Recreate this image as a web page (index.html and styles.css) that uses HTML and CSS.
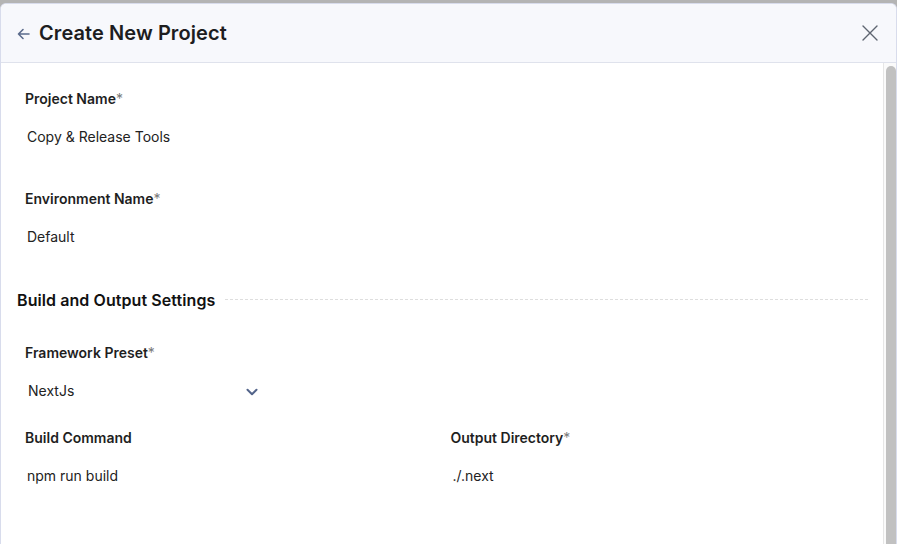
FILE: index.html
```html
<!DOCTYPE html>
<html lang="en">
<head>
<meta charset="utf-8">
<title>Create New Project</title>
<link rel="stylesheet" href="styles.css">
</head>
<body>
<div class="modal">
  <header class="modal-header">
    <div class="header-left">
      <svg class="back-icon" width="13" height="12" viewBox="0 0 13 12" fill="none" stroke="currentColor" stroke-width="1.6" stroke-linecap="round" stroke-linejoin="round"><path d="M12 6H1.5M6 1.5L1.5 6L6 10.5"/></svg>
      <h1 class="title">Create New Project</h1>
    </div>
    <svg class="close-icon" width="16" height="16" viewBox="0 0 16 16" fill="none" stroke="currentColor" stroke-width="1.4" stroke-linecap="round"><path d="M1 1L15 15M15 1L1 15"/></svg>
  </header>
  <div class="modal-body">
    <div class="content">
      <div class="field">
        <div class="label">Project Name<span class="req">*</span></div>
        <div class="value">Copy &amp; Release Tools</div>
      </div>
      <div class="field">
        <div class="label">Environment Name<span class="req">*</span></div>
        <div class="value">Default</div>
      </div>
      <div class="section-title">
        <span>Build and Output Settings</span>
        <span class="dash"></span>
      </div>
      <div class="field field-select">
        <div class="label">Framework Preset<span class="req">*</span></div>
        <div class="value select">
          <span>NextJs</span>
          <svg class="chevron" width="12" height="8" viewBox="0 0 12 8" fill="none" stroke="currentColor" stroke-width="2" stroke-linecap="round" stroke-linejoin="round"><path d="M1.5 1.8L6 6.2L10.5 1.8"/></svg>
        </div>
      </div>
      <div class="row">
        <div class="field">
          <div class="label">Build Command</div>
          <div class="value">npm run build</div>
        </div>
        <div class="field">
          <div class="label">Output Directory<span class="req">*</span></div>
          <div class="value">./.next</div>
        </div>
      </div>
    </div>
    <div class="scrollbar"><div class="thumb"></div></div>
  </div>
</div>
</body>
</html>
```

FILE: styles.css
```css
* { box-sizing: border-box; }
html, body { height: 100%; }
body {
  margin: 0;
  padding-top: 3px;
  background: #b4b4b4;
  font-family: Inter, "Noto Sans", sans-serif;
  color: #1f1f1f;
  overflow: hidden;
}
.modal {
  height: 541px;
  background: #ffffff;
  border: 1px solid #d8dcec;
  border-bottom: none;
  border-radius: 6px 6px 0 0;
  display: flex;
  flex-direction: column;
  overflow: hidden;
}
.modal-header {
  height: 59px;
  flex: none;
  background: #f7f8fc;
  border-bottom: 1px solid #dfe2ec;
  display: flex;
  align-items: center;
  justify-content: space-between;
  padding: 0 18px 0 16px;
}
.header-left { display: flex; align-items: center; }
.back-icon { color: #5b6b8c; margin-right: 9px; margin-top: 1px; }
.title {
  margin: 0;
  font-size: 20px;
  font-weight: 600;
  color: #1d1d1f;
  letter-spacing: 0.08px;
}
.close-icon { color: #5e6571; }
.modal-body {
  flex: 1;
  display: flex;
  min-height: 0;
}
.content {
  flex: 1;
  padding: 26px 15px 0 16px;
}
.scrollbar {
  width: 13px;
  flex: none;
  background: #fafafa;
  border-left: 1px solid #e6e6e6;
  padding: 3px 0 0 2px;
  display: flex;
}
.thumb {
  flex: 1;
  background: #c1c1c1;
  border-radius: 5px 5px 0 0;
}
.field { padding-left: 8px; margin-bottom: 34px; }
.label {
  height: 20px;
  line-height: 20px;
  font-size: 14px;
  font-weight: 600;
  color: #1f1f1f;
}
.req { color: #7a7a7a; font-weight: 400; }
.value {
  margin-top: 10px;
  height: 36px;
  line-height: 36px;
  padding-left: 2px;
  font-size: 14px;
  color: #222222;
}
.section-title {
  height: 22px;
  display: flex;
  align-items: center;
  font-size: 16px;
  font-weight: 600;
  color: #111111;
  letter-spacing: 0.08px;
  margin-bottom: 32px;
}
.dash {
  flex: 1;
  margin-left: 10px;
  border-top: 1px dashed #dedede;
  margin-top: -1px;
}
.field-select { margin-bottom: 19px; }
.select {
  width: 233px;
  padding-left: 3px;
  display: flex;
  align-items: center;
  justify-content: space-between;
}
.chevron { color: #53648a; margin-top: 1px; }
.row {
  display: grid;
  grid-template-columns: 1fr 1fr;
}
.row .field { margin-bottom: 0; }
```
